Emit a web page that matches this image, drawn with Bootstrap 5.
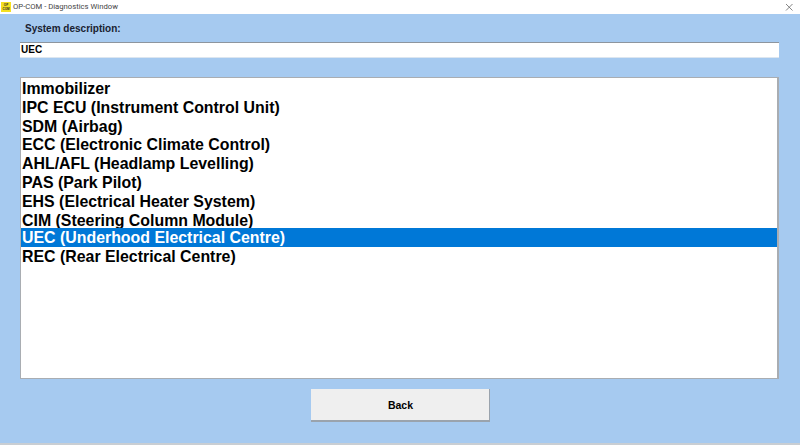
<!DOCTYPE html>
<html lang="en">
<head>
  <meta charset="UTF-8">
  <title>OP-COM - Diagnostics Window</title>
  <link href="https://cdn.jsdelivr.net/npm/bootstrap@5.3.3/dist/css/bootstrap.min.css" rel="stylesheet">
  <style>
    html, body { height: 445px; overflow: hidden; }
    body { font-family: "Liberation Sans", Arial, sans-serif; background: #c9ced3; color: #000; }
    .win-title { height: 14px; background: #fff; padding-left: 1px; font-family: Roboto, sans-serif; font-size: 7.7px; line-height: 14px; color: #444; gap: 2px; }
    .win-logo { width: 10px; height: 10px; background: #f5e020; color: #222; font-family: "Liberation Sans", sans-serif; font-size: 3px; line-height: 4px; font-weight: 700; text-align: center; padding-top: 1px; }
    .win-close { width: 10px; height: 10px; margin-right: 6px; }
    .win-body { height: 429px; background: #a6caf0; padding: 0 21px 0 20px; }
    .sys-label { font-size: 10px; font-weight: 700; color: #1a2230; line-height: 12px; padding: 9px 0 0 5px; margin-bottom: 7px; }
    .sys-input { height: 16px; font-size: 10px; font-weight: 700; padding: 0 0 0 1px; line-height: 13px; background: #fff; border-top: 1px solid #8d959e; border-bottom: 1px solid #dce6f0; border-radius: 0; margin-bottom: 19px; }
    .sys-list { height: 302px; background: #fff; border-radius: 0; border-style: solid; border-width: 1px 2px 1px 1px; border-color: #a9adb2; padding-top: 1px; }
    .list-group-item.sys-row { font-size: 15.9px; font-weight: 700; line-height: 19.4px; height: 18.8px; padding: 0 0 0 1px; margin: 0; background: transparent; border: 0; border-radius: 0; color: #000; white-space: nowrap; }
    .list-group-item.sys-row.active { background: #0078d7; color: #fff; }
    .back-wrap { padding-left: 1px; }
    .back-btn { width: 179px; height: 33px; margin-top: 10px; background: #efefef; border: 0; border-bottom: 2px solid #9aa3ad; border-right: 1px solid #9aa3ad; border-radius: 0; font-size: 10.5px; font-weight: 700; color: #000; padding: 2px 0 0 2px; }
    .win-edge { height: 2px; }
  </style>
</head>
<body>
  <div class="win-title d-flex align-items-center">
    <div class="win-logo flex-shrink-0">OP<br>COM</div>
    <span class="flex-grow-1">OP-COM - Diagnostics Window</span>
    <svg class="win-close" viewBox="0 0 10 10"><path d="M2 2 L8.5 8.5 M8.5 2 L2 8.5" stroke="#666" stroke-width="0.8" fill="none"/></svg>
  </div>
  <div class="win-body d-flex flex-column">
    <div class="sys-label">System description:</div>
    <div class="sys-input">UEC</div>
    <div class="sys-list list-group">
      <div class="sys-row list-group-item">Immobilizer</div>
      <div class="sys-row list-group-item">IPC ECU (Instrument Control Unit)</div>
      <div class="sys-row list-group-item">SDM (Airbag)</div>
      <div class="sys-row list-group-item">ECC (Electronic Climate Control)</div>
      <div class="sys-row list-group-item">AHL/AFL (Headlamp Levelling)</div>
      <div class="sys-row list-group-item">PAS (Park Pilot)</div>
      <div class="sys-row list-group-item">EHS (Electrical Heater System)</div>
      <div class="sys-row list-group-item">CIM (Steering Column Module)</div>
      <div class="sys-row list-group-item active">UEC (Underhood Electrical Centre)</div>
      <div class="sys-row list-group-item">REC (Rear Electrical Centre)</div>
    </div>
    <div class="back-wrap d-flex justify-content-center">
      <button type="button" class="btn back-btn">Back</button>
    </div>
  </div>
  <div class="win-edge"></div>
  <script src="https://cdn.jsdelivr.net/npm/bootstrap@5.3.3/dist/js/bootstrap.bundle.min.js"></script>
</body>
</html>
